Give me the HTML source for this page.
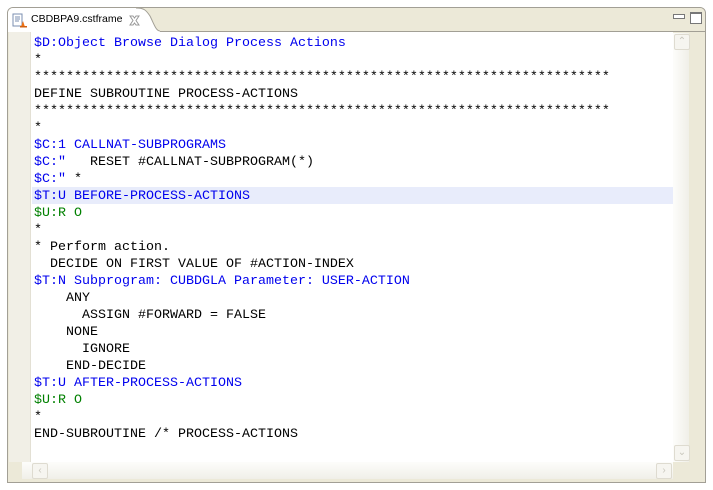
<!DOCTYPE html>
<html><head><style>
body{margin:0;width:713px;height:490px;background:#fff;position:relative;overflow:hidden;font-family:"Liberation Sans",sans-serif}
.frame{position:absolute;left:7px;top:7px;width:697px;height:474px;border:1px solid #a29f95;border-radius:6px 6px 0 0;background:#ece9d8;overflow:hidden}
.hdr{position:absolute;left:0;top:0;width:697px;height:23px;background:#ece9d8;border-bottom:1px solid #a29f95}
.tab{position:absolute;left:0;top:0;width:132px;height:24px;background:#fff}
.tabtxt{position:absolute;left:23px;top:5px;font-size:10.5px;color:#000}
.content{position:absolute;left:14px;top:24px;width:651px;height:430px;background:#fff}
.ruler{position:absolute;left:1px;top:24px;width:21px;height:430px;background:#f1efe6;border-right:1px solid #e3e0d4}
.code{position:absolute;left:26px;top:27px;font-family:"Liberation Mono",monospace;font-size:13.33px;line-height:17px;white-space:pre;color:#000}
.b{color:#0000ee}.g{color:#008000}
.hl{position:absolute;left:24px;top:179px;width:641px;height:17px;background:#e8ecfb}
.vs{position:absolute;left:665px;top:25px;width:16px;height:429px;background:linear-gradient(90deg,#fdfdfb,#f0efe8)}
.hs{position:absolute;left:14px;top:454px;width:651px;height:17px;background:linear-gradient(#fdfdfb,#f0efe8)}
.btn{position:absolute;width:14px;height:14px;border:1px solid #dedbd0;border-radius:2px;background:#f6f5f0;color:#c8c6bc;font-size:10px;text-align:center;line-height:14px}
</style></head><body>
<div class="frame">
<div class="hdr"></div>
<div class="tab"></div>
<svg style="position:absolute;left:128px;top:0" width="24" height="25"><path d="M0 0 C8 0 10 2 14 8 C18 16 20 23 24 23 L24 25 L0 25Z" fill="#fff"/><path d="M0 0 C8 0 10 2 14 8 C18 16 20 23 24 23" fill="none" stroke="#a29f95"/></svg>
<svg style="position:absolute;left:4px;top:5px" width="16" height="16"><rect x="1" y="1" width="9" height="12" fill="#fff" stroke="#7b8fb0"/><path d="M3 4h5M3 6h5M3 8h4" stroke="#7b8fb0"/><path d="M9 14 L11 8 L13 14Z" fill="#f07010"/><rect x="8" y="13" width="7" height="1.5" fill="#d06010"/></svg>
<div class="tabtxt">CBDBPA9.cstframe</div>
<svg style="position:absolute;left:121px;top:7px" width="11" height="11"><path d="M1 1l3 0 1.5 2 1.5-2 3 0-3 4.5 3 4.5-3 0-1.5-2-1.5 2-3 0 3-4.5z" fill="#fff" stroke="#999"/></svg>
<div style="position:absolute;left:665px;top:6px;width:10px;height:3px;border:1px solid #777;background:#fff"></div>
<div style="position:absolute;left:682px;top:4px;width:10px;height:9px;border:1px solid #777;border-top-width:2px;background:#fff"></div>
<div class="content"></div>
<div class="ruler"></div>
<div class="hl"></div>
<div class="code"><span class="b">$D:Object Browse Dialog Process Actions</span>
*
************************************************************************
DEFINE SUBROUTINE PROCESS-ACTIONS
************************************************************************
*
<span class="b">$C:1 CALLNAT-SUBPROGRAMS</span>
<span class="b">$C:"</span>   RESET #CALLNAT-SUBPROGRAM(*)
<span class="b">$C:"</span> *
<span class="b">$T:U BEFORE-PROCESS-ACTIONS</span>
<span class="g">$U:R O</span>
*
* Perform action.
  DECIDE ON FIRST VALUE OF #ACTION-INDEX
<span class="b">$T:N Subprogram: CUBDGLA Parameter: USER-ACTION</span>
    ANY
      ASSIGN #FORWARD = FALSE
    NONE
      IGNORE
    END-DECIDE
<span class="b">$T:U AFTER-PROCESS-ACTIONS</span>
<span class="g">$U:R O</span>
*
END-SUBROUTINE /* PROCESS-ACTIONS</div>
<div class="vs"></div>
<div class="btn" style="left:666px;top:26px">&#8963;</div>
<div class="btn" style="left:666px;top:437px">&#8964;</div>
<div class="hs"></div>
<div class="btn" style="left:24px;top:455px">&lsaquo;</div>
<div class="btn" style="left:648px;top:455px">&rsaquo;</div>
</div>
</body></html>
